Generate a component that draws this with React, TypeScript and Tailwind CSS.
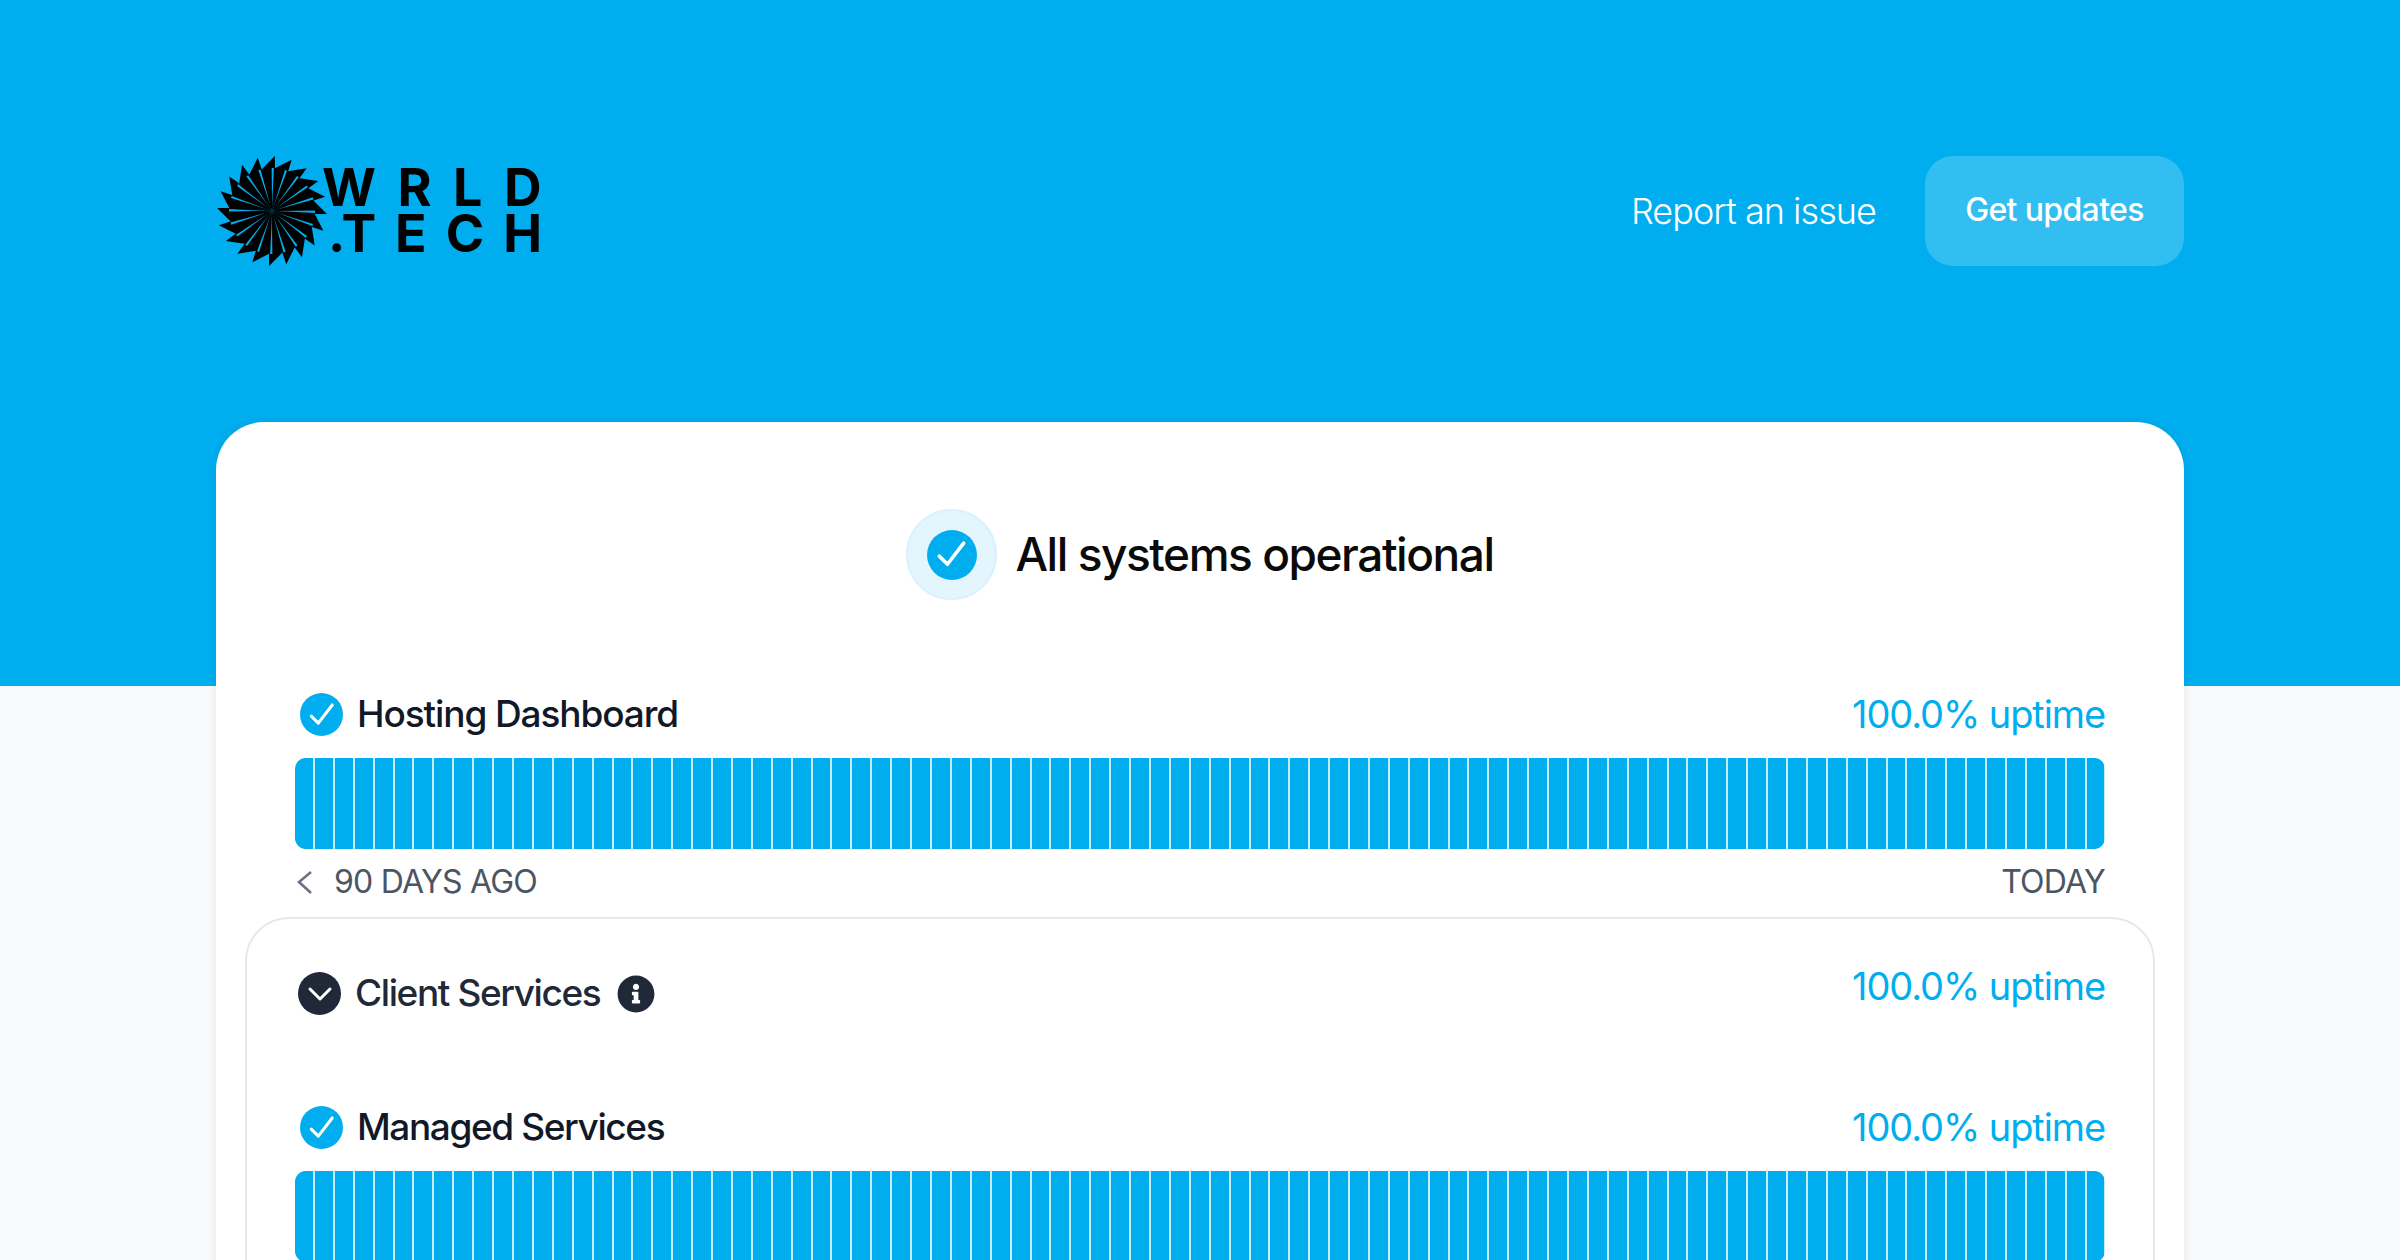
import { FaInfoCircle } from "react-icons/fa";

const days = Array.from({ length: 91 }, (_, i) => i);

// pinwheel logo, blades worked out from the centre
function Spiral() {
  const count = 20;
  const cx = 60;
  const cy = 60;
  const pt = (r: number, deg: number) => {
    const a = (deg * Math.PI) / 180;
    return `${(cx + r * Math.cos(a)).toFixed(2)},${(cy + r * Math.sin(a)).toFixed(2)}`;
  };
  const blades = Array.from({ length: count }, (_, i) => (i * 360) / count + 3);
  return (
    <svg width="120" height="120" viewBox="0 0 120 120" className="shrink-0">
      {blades.map((a) => (
        <polygon key={a} points={`${cx},${cy} ${pt(42, a - 19)} ${pt(55, a)} ${pt(43, a + 1)}`} fill="#000" />
      ))}
      {blades.map((a) => (
        <polygon key={a} points={`${pt(6, a - 2)} ${pt(43, a - 3.5)} ${pt(43, a - 0.5)}`} fill="#00aeef" />
      ))}
    </svg>
  );
}

function CheckDot({ className }: { className: string }) {
  return (
    <span className={`flex shrink-0 items-center justify-center rounded-full bg-[#00aeef] ${className}`}>
      <svg viewBox="0 0 24 24" className="h-[78%] w-[78%]" fill="none" stroke="#fff" strokeWidth="2.2" strokeLinecap="round" strokeLinejoin="round">
        <path d="M4.5 13 L9.5 18 L19.5 5" />
      </svg>
    </span>
  );
}

function UptimeBar({ className = "" }: { className?: string }) {
  return (
    <div className={`flex h-[91px] shrink-0 gap-[2px] overflow-hidden rounded-[11px] bg-[#c6edfc] ${className}`}>
      {days.map((d) => (
        <div key={d} className="h-full flex-1 bg-[#00aeef]" />
      ))}
    </div>
  );
}

function Uptime() {
  return <span className="mt-[-2px] text-[38px] leading-[44px] tracking-[-1.1px] text-[#00aeef]">100.0% uptime</span>;
}

export default function App() {
  return (
    <div className="h-[1260px] overflow-hidden bg-[#f8fafc] font-['Inter',sans-serif]">
      {/* 상단 */}
      <div className="h-[686px] bg-[#00aeef] px-[216px] pt-[156px]">
        <div className="flex h-[110px] items-center justify-between">
          <div className="flex items-center">
            <div className="ml-[-4px] flex">
              <Spiral />
            </div>
            <div className="ml-[-10px] font-bold text-black">
              <div className="text-[52px] leading-[46px] tracking-[21.5px]">WRLD</div>
              <div className="ml-[6px] text-[52px] leading-[46px] tracking-[19px]">
                <span className="tracking-[-4px]">.</span>TECH
              </div>
            </div>
          </div>
          <div className="flex items-center gap-[49px]">
            <span className="text-[36px] font-light tracking-[-0.95px] text-white">Report an issue</span>
            <button className="flex h-[110px] w-[259px] items-center justify-center rounded-[28px] bg-[#33bef2] pb-[2px] text-[32px] font-medium tracking-[-0.65px] text-white">
              Get updates
            </button>
          </div>
        </div>
      </div>

      {/* 카드 */}
      <div className="mx-[216px] mt-[-264px] h-[900px] rounded-[48px] bg-white px-[29px] pt-[87px] shadow-[0_0_12px_rgba(15,23,42,0.08)]">
        <div className="flex items-center justify-center gap-[18px]">
          <span className="flex h-[91px] w-[91px] items-center justify-center rounded-full border-2 border-[#d9f2fd] bg-[#e3f6fe]">
            <CheckDot className="h-[50px] w-[50px]" />
          </span>
          <h1 className="text-[46px] font-medium leading-[91px] tracking-[-1.45px] text-[#0a0a0a]">All systems operational</h1>
        </div>

        <div className="mt-[93px] px-[50px]">
          <div className="flex h-[43px] items-center justify-between">
            <div className="flex items-center gap-[14px] pl-[5px]">
              <CheckDot className="h-[43px] w-[43px]" />
              <span className="mt-[-1px] text-[37px] font-medium tracking-[-1.1px] text-[#111827]">Hosting Dashboard</span>
            </div>
            <Uptime />
          </div>
          <UptimeBar className="mt-[22px]" />
          <div className="mt-[15px] flex h-[36px] items-center justify-between text-[32px] tracking-[-0.75px] text-[#4b5563]">
            <div className="flex items-center gap-[20px]">
              <svg width="18" height="26" viewBox="0 0 18 26" fill="none" stroke="#6b7280" strokeWidth="2.6" className="ml-[1px]">
                <path d="M15 3 L3 13 L15 24" />
              </svg>
              <span>90 DAYS AGO</span>
            </div>
            <span>TODAY</span>
          </div>
        </div>

        <div className="mt-[17px] h-[600px] rounded-[44px] border-2 border-[#e5e7eb] px-[48px] pt-[53px]">
          <div className="flex h-[43px] items-center justify-between">
            <div className="flex items-center gap-[14px] pl-[3px]">
              <span className="flex h-[43px] w-[43px] items-center justify-center rounded-full bg-[#1f2937]">
                <svg width="28" height="16" viewBox="0 0 28 16" fill="none" stroke="#fff" strokeWidth="3" strokeLinecap="round" strokeLinejoin="round">
                  <path d="M4 3 L14 13 L24 3" />
                </svg>
              </span>
              <span className="mt-[-2px] text-[37px] font-medium tracking-[-1.4px] text-[#1f2937]">Client Services</span>
              <FaInfoCircle className="ml-[3px] text-[38px] text-[#1f2937]" />
            </div>
            <div className="mt-[-14px] flex">
              <Uptime />
            </div>
          </div>
          <div className="mt-[91px] flex h-[43px] items-center justify-between">
            <div className="flex items-center gap-[14px] pl-[5px]">
              <CheckDot className="h-[43px] w-[43px]" />
              <span className="mt-[-1px] text-[37px] font-medium tracking-[-1.4px] text-[#111827]">Managed Services</span>
            </div>
            <Uptime />
          </div>
          <UptimeBar className="mt-[22px]" />
        </div>
      </div>
    </div>
  );
}
